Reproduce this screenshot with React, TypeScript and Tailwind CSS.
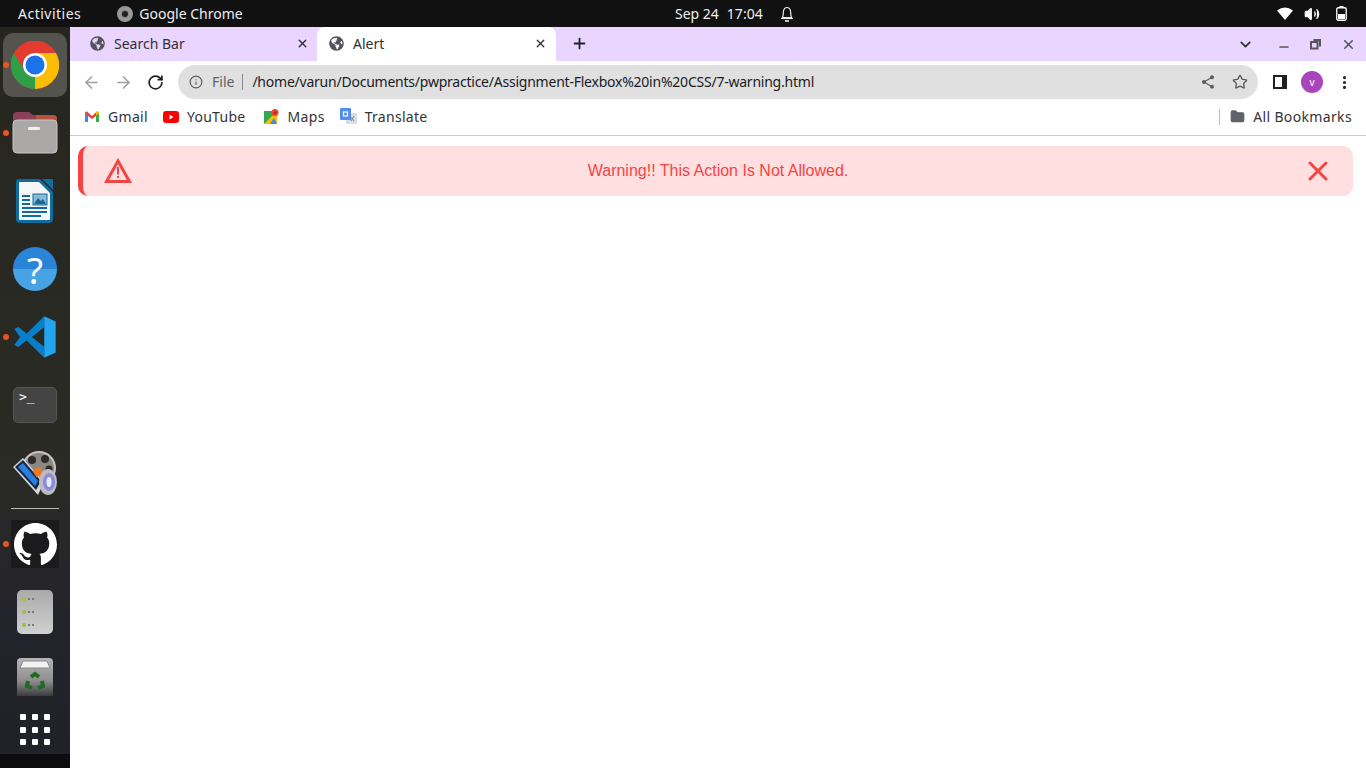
import { ReactNode } from "react"
import { X, ArrowLeft, ArrowRight, RotateCw, Info, Star, ChevronDown, Plus, Minus, MoreVertical, Folder, Volume2 } from "lucide-react"
import { FaGlobeAmericas } from "react-icons/fa"
import { MdShare } from "react-icons/md"

const uiFont = "font-['Noto_Sans',sans-serif]"

function ChromeLogo({ size = 48 }: { size?: number }) {
  return (
    <svg width={size} height={size} viewBox="0 0 48 48">
      <circle cx="24" cy="24" r="24" fill="#e33b2e" />
      <path d="M24 24 L45 12 A24 24 0 0 1 24 48 Z" fill="#fbbc04" />
      <path d="M24 24 L24 48 A24 24 0 0 1 3 12 Z" fill="#2f9e49" />
      <path d="M3 12 L13.5 30 L24 24 Z" fill="#2f9e49" />
      <path d="M24 12 L45 12 L34.5 30 L24 48 L24 24 Z" fill="#fbbc04" />
      <path d="M24 13 A11 11 0 0 0 13.5 30 L3 12 A24 24 0 0 1 45 12 L24 12 Z" fill="#e33b2e" />
      <circle cx="24" cy="24" r="12" fill="#fff" />
      <circle cx="24" cy="24" r="9.5" fill="#1a73e8" />
    </svg>
  )
}

function FilesIcon() {
  return (
    <svg width="46" height="42" viewBox="0 0 46 42">
      <path d="M1 4 a4 4 0 0 1 4-4 h12 l4 3 h20 a4 4 0 0 1 4 4 v12 H1 Z" fill="#8c3f5c" />
      <path d="M24 3 h17 a4 4 0 0 1 4 4 v6 H24 Z" fill="#b5533f" />
      <rect x="1" y="8" width="44" height="33" rx="4" fill="#aaa8a6" stroke="#c8c6c4" strokeWidth="1" />
      <rect x="16" y="15" width="12" height="3" rx="1" fill="#f0f0f0" />
    </svg>
  )
}

function WriterIcon() {
  return (
    <svg width="38" height="46" viewBox="0 0 38 46">
      <path d="M3 1 h21 l13 13 v27 a4 4 0 0 1-4 4 H4 a4 4 0 0 1-4-4 V4 a3 3 0 0 1 3-3 Z" fill="#0f6c9f" />
      <path d="M4 4 h19 l11 11 v26 a1 1 0 0 1-1 1 H4 a1 1 0 0 1-1-1 V5 a1 1 0 0 1 1-1 Z" fill="#f5f6f6" />
      <path d="M26 1 h10 a1 1 0 0 1 1 1 v10 Z" fill="#0f6c9f" />
      <rect x="6" y="17" width="8" height="2" fill="#0f6c9f" />
      <rect x="6" y="21" width="8" height="2" fill="#0f6c9f" />
      <rect x="6" y="25" width="8" height="2" fill="#0f6c9f" />
      <rect x="6" y="29" width="25" height="2" fill="#0f6c9f" />
      <rect x="6" y="33" width="25" height="2" fill="#0f6c9f" />
      <rect x="6" y="37" width="19" height="2" fill="#0f6c9f" />
      <rect x="17" y="16" width="14" height="11" fill="#8fb8d4" stroke="#0f6c9f" />
      <path d="M18 26 l4-6 3 3 2-2 3 5 Z" fill="#0f6c9f" />
    </svg>
  )
}

function HelpIcon() {
  return (
    <div className={`w-[44px] h-[44px] rounded-full bg-[linear-gradient(#2a85d8_0%,#2a85d8_50%,#48a3e4_50%,#48a3e4_100%)] flex items-center justify-center text-white text-[37px] leading-none ${uiFont}`}>
      ?
    </div>
  )
}

function VsCodeIcon() {
  return (
    <svg width="44" height="44" viewBox="0 0 100 100">
      <path d="M71 3 L31 42 L12 27 L3 32 L16 50 L3 68 L12 73 L31 58 L71 97 L71 72 L43 50 L71 28 Z" fill="#0a7fc9" />
      <path d="M71 3 L97 15 V85 L71 97 Z" fill="#22a4ee" />
    </svg>
  )
}

function TerminalIcon() {
  return (
    <div className="w-[44px] h-[36px] rounded-[5px] bg-[#444] border border-[#555] relative">
      <span className="absolute left-[5px] top-[1px] text-white text-[13px] leading-[16px] font-['DejaVu_Sans_Mono',monospace]">&gt;_</span>
    </div>
  )
}

function MediaIcon() {
  return (
    <svg width="46" height="46" viewBox="0 0 46 46">
      <circle cx="27" cy="18" r="17" fill="#c9c5c0" />
      <circle cx="27" cy="18" r="15" fill="#8b8782" />
      <circle cx="20" cy="10" r="4" fill="#2e2c2a" />
      <circle cx="33" cy="9" r="4" fill="#2e2c2a" />
      <circle cx="37" cy="19" r="3.5" fill="#2e2c2a" />
      <circle cx="17" cy="21" r="3.5" fill="#2e2c2a" />
      <path d="M1 17 L11 8 L32 32 L26 45 Z" fill="#d5d5d5" />
      <path d="M3 17 L11 10 L29 31 L24 40 Z" fill="#15294a" />
      <path d="M6 17 L11 13 L26 31 L23 36 Z" fill="#2a7fdc" />
      <rect x="22" y="18" width="8" height="8" fill="#f07a24" transform="rotate(-30 26 22)" />
      <ellipse cx="36" cy="32" rx="9" ry="13" fill="#bcbcc0" />
      <ellipse cx="37" cy="32" rx="6" ry="9" fill="#8a8ae0" />
      <ellipse cx="37" cy="32" rx="2.5" ry="5" fill="#e8e8ff" />
    </svg>
  )
}

function GithubIcon() {
  return (
    <div className="w-[48px] h-[48px] bg-[#1b1a1c] flex items-center justify-center">
      <svg width="43" height="43" viewBox="0 0 16 16" fill="#fff">
        <path d="M8 0C3.58 0 0 3.58 0 8c0 3.54 2.29 6.53 5.47 7.59.4.07.55-.17.55-.38 0-.19-.01-.82-.01-1.49-2.01.37-2.53-.49-2.69-.94-.09-.23-.48-.94-.82-1.13-.28-.15-.68-.52-.01-.53.63-.01 1.08.58 1.23.82.72 1.21 1.87.87 2.33.66.07-.52.28-.87.51-1.07-1.78-.2-3.64-.89-3.64-3.95 0-.87.31-1.59.82-2.15-.08-.2-.36-1.02.08-2.12 0 0 .67-.21 2.2.82.64-.18 1.32-.27 2-.27s1.36.09 2 .27c1.53-1.04 2.2-.82 2.2-.82.44 1.1.16 1.92.08 2.12.51.56.82 1.27.82 2.15 0 3.07-1.87 3.75-3.65 3.95.29.25.54.73.54 1.48 0 1.07-.01 1.93-.01 2.2 0 .21.15.46.55.38A8.01 8.01 0 0 0 16 8c0-4.42-3.58-8-8-8z" />
      </svg>
    </div>
  )
}

function DrivesIcon() {
  return (
    <div className="w-[36px] h-[44px] rounded-[5px] bg-[linear-gradient(#aaa,#d0d0d0)] flex flex-col justify-around py-[3px] pl-[5px]">
      {[0, 1, 2].map((i) => (
        <div key={i} className="flex items-center gap-[2px]">
          <span className="w-[4px] h-[4px] rounded-full bg-[#9cc23c]" />
          <span className="w-[2px] h-[2px] bg-[#777]" />
          <span className="w-[2px] h-[2px] bg-[#777]" />
        </div>
      ))}
    </div>
  )
}

function TrashIcon() {
  return (
    <svg width="36" height="38" viewBox="0 0 36 38" className="-mt-[6px]">
      <defs>
        <linearGradient id="trash" x1="0" y1="0" x2="0" y2="1">
          <stop offset="0" stopColor="#b5b5b5" />
          <stop offset="0.6" stopColor="#8e8e8e" />
          <stop offset="1" stopColor="#3c3c40" />
        </linearGradient>
      </defs>
      <path d="M4 0 h28 a4 4 0 0 1 4 4 V38 H0 V4 a4 4 0 0 1 4-4 Z" fill="url(#trash)" />
      <path d="M6 3 h24 l3 7 H3 Z" fill="#f2f2f2" stroke="#8c8c8c" />
      <g fill="none" stroke="#1f6b23" strokeWidth="4">
        <path d="M14 19 l4-3 4 3" />
        <path d="M25 23 l1 5 -5 2" />
        <path d="M15 30 l-5-2 1-5" />
      </g>
    </svg>
  )
}

function DockItem({ dot, active, children }: { dot?: boolean; active?: boolean; children: ReactNode }) {
  return (
    <div className="relative h-[68px] w-full flex items-center justify-center shrink-0">
      {dot && <span className="absolute left-[3px] top-1/2 -mt-[3px] w-[6px] h-[6px] rounded-full bg-[#e95420]" />}
      {active ? (
        <div className="w-[64px] h-[64px] rounded-[10px] bg-[#55534e] flex items-center justify-center">{children}</div>
      ) : (
        children
      )}
    </div>
  )
}

function Dock() {
  return (
    <aside className="w-[70px] shrink-0 flex flex-col bg-[linear-gradient(#26261f_0%,#2a2b25_60%,#23232c_82%,#212129_100%)]">
      <div className="flex-1 flex flex-col items-center pt-[4px]">
        <DockItem dot active><ChromeLogo /></DockItem>
        <DockItem dot><FilesIcon /></DockItem>
        <DockItem><WriterIcon /></DockItem>
        <DockItem><HelpIcon /></DockItem>
        <DockItem dot><VsCodeIcon /></DockItem>
        <DockItem><TerminalIcon /></DockItem>
        <DockItem><MediaIcon /></DockItem>
        <div className="w-[48px] h-[1px] bg-[#bbb] shrink-0 my-[1px]" />
        <DockItem dot><GithubIcon /></DockItem>
        <DockItem><DrivesIcon /></DockItem>
        <DockItem><TrashIcon /></DockItem>
        <div className="grid grid-cols-3 gap-x-[6px] gap-y-[6.5px]">
          {Array.from({ length: 9 }).map((_, i) => (
            <span key={i} className="w-[6px] h-[6px] rounded-[1px] bg-white" />
          ))}
        </div>
      </div>
      <div className="h-[14px] bg-[#0c0c0e]" />
    </aside>
  )
}

function TopBar() {
  return (
    <header className={`h-[27px] bg-[#111] text-[#eee] text-[14px] flex items-center justify-between pl-[18px] pr-[19px] relative ${uiFont}`}>
      <div className="flex items-center">
        <span className="tracking-[0.5px]">Activities</span>
        <span className="ml-[36px] w-[16px] h-[16px] rounded-full bg-[#888] border-[4px] border-[#999] flex items-center justify-center">
          <span className="w-[6px] h-[6px] rounded-full bg-[#222]" />
        </span>
        <span className="ml-[6px]">Google Chrome</span>
      </div>
      <div className="absolute left-[675px] top-0 h-full flex items-center">
        <span>Sep 24</span>
        <span className="ml-[8px]">17:04</span>
        <svg width="14" height="16" viewBox="0 0 14 16" fill="none" stroke="#eee" strokeWidth="1.2" className="ml-[17px]">
          <path d="M2.5 11.5 C3.5 9.5 3 7.5 3.5 5 C4 2.5 5.5 1.5 7 1.5 C8.5 1.5 10 2.5 10.5 5 C11 7.5 10.5 9.5 11.5 11.5 Z" />
          <path d="M1 12.5 H13" />
          <path d="M5 15 H9" strokeWidth="1.6" />
        </svg>
      </div>
      <div className="flex items-center">
        <svg width="16" height="13" viewBox="0 0 16 13" fill="#fff"><path d="M8 13 L0 3.5 Q8 -2.5 16 3.5 Z" /></svg>
        <Volume2 size={16} fill="#fff" className="ml-[11px]" />
        <svg width="11" height="15" viewBox="0 0 11 15" className="ml-[16px]">
          <rect x="3.5" y="0" width="4" height="2" fill="#fff" />
          <rect x="0.75" y="1.75" width="9.5" height="12.5" rx="1.5" fill="none" stroke="#fff" strokeWidth="1.3" />
          <rect x="2" y="8" width="7" height="5" fill="#fff" />
        </svg>
      </div>
    </header>
  )
}

function Tab({ title, active }: { title: string; active?: boolean }) {
  return (
    <div className={`h-full flex items-center pb-[2px] ${active ? "w-[239px] pl-[12px] pr-[9px] bg-white rounded-t-[8px]" : "w-[247px] pl-[20px] pr-[8px] rounded-br-[8px]"}`}>
      <FaGlobeAmericas size={15} className="text-[#54545c]" />
      <span className="ml-[9px] text-[14px] text-[#303034]">{title}</span>
      <X size={13} strokeWidth={2.5} className="ml-auto text-[#303034]" />
    </div>
  )
}

function TabStrip() {
  return (
    <div className="h-[34px] bg-[#e9d5ff] flex items-end">
      <Tab title="Search Bar" />
      <Tab title="Alert" active />
      <Plus size={17} strokeWidth={2.5} className="ml-[15px] mb-[9px] text-[#222]" />
      <div className="ml-auto flex items-center h-full pr-[10px] text-[#55555d]">
        <ChevronDown size={17} strokeWidth={2.5} className="text-[#333] mr-[23px]" />
        <Minus size={14} strokeWidth={2.5} className="mr-[19px] mt-[6px]" />
        <svg width="11" height="11" viewBox="0 0 11 11" fill="none" stroke="currentColor" strokeWidth="2" className="mr-[20px]">
          <path d="M3.5 1 H10 V7.5" />
          <rect x="1" y="3" width="6.5" height="6.5" fill="#e9d5ff" />
        </svg>
        <X size={15} strokeWidth={2.5} />
      </div>
    </div>
  )
}

function Toolbar() {
  return (
    <div className="h-[40px] bg-white flex items-center pl-[12px] pr-[12px] pt-[2px]">
      <ArrowLeft size={19} strokeWidth={2} className="text-[#9f9fa4]" />
      <ArrowRight size={19} strokeWidth={2} className="ml-[13px] text-[#9f9fa4]" />
      <RotateCw size={17} strokeWidth={2.4} className="ml-[14px] text-[#1f1f22]" />
      <div className="ml-[14px] h-[34px] w-[1080px] rounded-full bg-[#e0e0e0] flex items-center pl-[11px] pr-[10px]">
        <Info size={14} strokeWidth={2} className="text-[#5c5c60]" />
        <span className="ml-[9px] pb-[2px] text-[14px] text-[#5f6368]">File</span>
        <span className="ml-[8px] h-[16px] w-[1px] bg-[#8a8a8e]" />
        <span className="ml-[9px] pb-[2px] text-[14px] text-[#1b1b1f] tracking-[-0.23px] whitespace-nowrap">/home/varun/Documents/pwpractice/Assignment-Flexbox%20in%20CSS/7-warning.html</span>
        <MdShare size={16} className="ml-auto text-[#5c5c60]" />
        <Star size={16} strokeWidth={2} className="ml-[16px] text-[#5c5c60]" />
      </div>
      <svg width="14" height="14" viewBox="0 0 14 14" className="ml-[15px]">
        <rect width="14" height="14" fill="#1f1f26" />
        <rect x="2" y="2" width="7" height="10" fill="#fff" />
      </svg>
      <span className="ml-[14px] w-[22px] h-[22px] rounded-full bg-[#a845bb] text-white text-[10px] flex items-center justify-center">v</span>
      <MoreVertical size={17} strokeWidth={2.5} className="ml-[13px] text-[#222]" />
    </div>
  )
}

function Bookmark({ icon, label, gap }: { icon: ReactNode; label: string; gap: string }) {
  return (
    <div className={`flex items-center ${gap}`}>
      {icon}
      <span>{label}</span>
    </div>
  )
}

function BookmarksBar() {
  return (
    <div className="h-[35px] bg-white border-b border-[#ccc] flex items-center pl-[15px] pr-[14px] pb-[3px] text-[14px] tracking-[0.3px] text-[#333338]">
      <Bookmark
        gap="gap-[9px] mr-[15px]"
        label="Gmail"
        icon={
          <svg width="14" height="11" viewBox="0 0 14 11">
            <path d="M0 2 L0 11 H3 V4 Z" fill="#4285f4" />
            <path d="M14 2 V11 H11 V4 Z" fill="#34a853" />
            <path d="M0 2 Q0 0 2 0.5 L7 5 L12 0.5 Q14 0 14 2 L11 5 L7 8 L3 5 Z" fill="#ea4335" />
            <path d="M11 1.5 L12 0.5 Q14 0 14 2 L11 5 Z" fill="#fbbc04" />
          </svg>
        }
      />
      <Bookmark
        gap="gap-[8px] mr-[18px]"
        label="YouTube"
        icon={
          <svg width="16" height="12" viewBox="0 0 16 12">
            <rect width="16" height="12" rx="3" fill="#f00" />
            <path d="M6.5 3.5 L10.5 6 L6.5 8.5 Z" fill="#fff" />
          </svg>
        }
      />
      <Bookmark
        gap="gap-[9px] mr-[15px]"
        label="Maps"
        icon={
          <svg width="15" height="15" viewBox="0 0 15 15">
            <rect y="2" width="13" height="13" fill="#34a853" />
            <path d="M0 15 L13 2 V15 Z" fill="#fbbc04" />
            <path d="M6 15 L10 9 L13 15 Z" fill="#4285f4" />
            <circle cx="11" cy="3.5" r="3.5" fill="#ea4335" />
            <circle cx="11" cy="3.5" r="1.2" fill="#a52714" />
          </svg>
        }
      />
      <Bookmark
        gap="gap-[8px]"
        label="Translate"
        icon={
          <svg width="17" height="17" viewBox="0 0 17 17">
            <rect x="6" y="5" width="11" height="11" fill="#d9dde3" />
            <rect width="11" height="12" rx="1" fill="#4f8ef0" />
            <rect x="3.5" y="4" width="4" height="4" fill="none" stroke="#fff" strokeWidth="1.2" />
            <path d="M10 8 l4 5 M14 8 l-3 5" stroke="#7b8087" strokeWidth="1" />
          </svg>
        }
      />
      <div className="ml-auto flex items-center">
        <span className="h-[16px] w-[1px] bg-[#bbb] mr-[10px]" />
        <Folder size={15} fill="#5f6368" className="text-[#5f6368]" />
        <span className="ml-[8px] tracking-[0.35px]">All Bookmarks</span>
      </div>
    </div>
  )
}

function WarningAlert() {
  return (
    <div className="h-[50px] rounded-[10px] bg-[#ffdfdf] border-l-[5px] border-[#f44444] flex items-center justify-between pl-[21px] pr-[25px] text-[#f44444] font-['Liberation_Sans',sans-serif]">
      <svg width="28" height="25" viewBox="0 0 28 25" fill="none" stroke="currentColor" strokeWidth="3" className="-mt-[1px]">
        <path d="M14 3 L25.5 23.5 H2.5 Z" />
        <path d="M14 9 V16.5" strokeWidth="2" />
        <path d="M14 18 V20" strokeWidth="2" />
      </svg>
      <span className="text-[16px] -ml-[4px]">Warning!! This Action Is Not Allowed.</span>
      <svg width="20" height="20" viewBox="0 0 20 20" stroke="currentColor" strokeWidth="3" strokeLinecap="round">
        <path d="M2 2 L18 18 M18 2 L2 18" />
      </svg>
    </div>
  )
}

export default function App() {
  return (
    <div className="w-[1366px] h-[768px] overflow-hidden flex flex-col bg-white">
      <TopBar />
      <div className="flex-1 flex min-h-0">
        <Dock />
        <main className={`flex-1 flex flex-col min-w-0 ${uiFont}`}>
          <TabStrip />
          <Toolbar />
          <BookmarksBar />
          <div className="flex-1 bg-white pt-[10px] pl-[8px] pr-[13px]">
            <WarningAlert />
          </div>
        </main>
      </div>
    </div>
  )
}
